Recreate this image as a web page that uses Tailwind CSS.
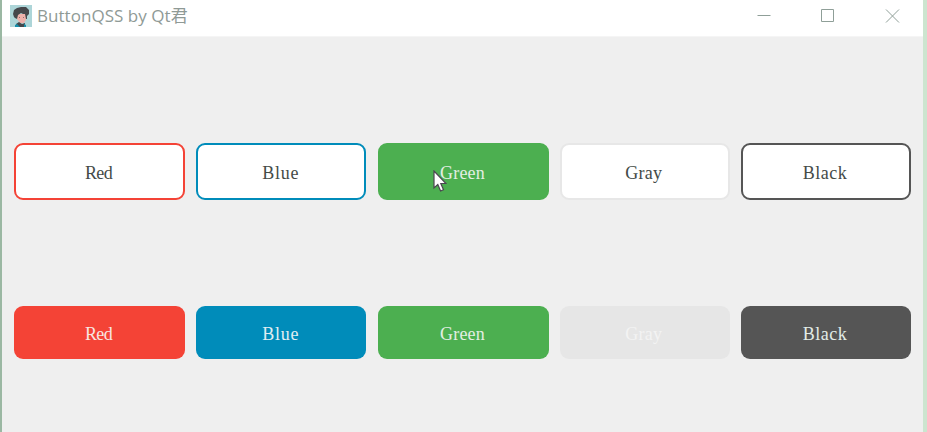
<!DOCTYPE html>
<html lang="en">
<head>
<meta charset="utf-8">
<title>ButtonQSS by Qt君</title>
<script src="https://cdn.jsdelivr.net/npm/@tailwindcss/browser@4"></script>
</head>
<body class="w-[927px] h-[432px] overflow-hidden bg-[#cce5cf] pr-1">
<div class="h-full flex flex-col bg-[#efefef] border-l-2 border-[#9bb8a3]">
  <header class="h-[37px] shrink-0 bg-white border-b border-[#f5f5f5] flex items-start pl-2">
    <svg class="mt-[5px] w-[22px] h-[22px] shrink-0" viewBox="0 0 22 22">
      <path fill="#add5d8" d="M0 0h22v22H0z"/>
      <path fill="#edb0aa" d="M7 9h9v6l-2 3h-4l-3-4z"/>
      <path fill="#45474b" d="M4 12L3 9l1-4 3-2 4-1h5l3 3v4l-2 2v3h-1l-1-5h-2l-2-1-3 2-1 4-2-1z"/>
      <path fill="#45474b" d="M6 22v-3l3-2 3 2 3-1v4z"/>
      <path fill="#168eaa" d="M5 20l2-1 3 3H5zM14 19l2 1v2h-2z"/>
      <path fill="#8d7476" d="M9 12h1v1H9zM13 12h1v1h-1z"/>
    </svg>
    <h1 class="ml-[5px] mt-[4px] text-[17px] leading-6 tracking-[0.04px] text-[#8f9a96] whitespace-nowrap font-['Open_Sans','Noto_Sans_CJK_SC',sans-serif]">ButtonQSS by Qt君</h1>
    <div class="ml-auto mr-[23px] mt-[8px] flex gap-[50px] text-[#8f9f98]">
      <svg class="w-[14px] h-[15px]" viewBox="0 0 14 15" fill="none" stroke="currentColor"><path d="M.5 7.500h13"/></svg>
      <svg class="w-[14px] h-[15px]" viewBox="0 0 14 15" fill="none" stroke="currentColor"><path d="M.5 1.500h12v12H.5z"/></svg>
      <svg class="w-[15px] h-[15px]" viewBox="0 0 15 15" fill="none" stroke="currentColor"><path d="M1 1.500l13 13M14 1.500l-13 13"/></svg>
    </div>
  </header>
  <main class="pt-[106px] pl-3 font-['Liberation_Serif',serif] text-[18px]">
    <div class="grid grid-cols-[171px_170px_171px_170px_170px] gap-x-[11.25px] gap-y-[106px] grid-rows-[57px_53px]">
      <button class="rounded-[9px] border-2 border-[#f44336] bg-white text-[#444b48] pt-1 pr-[2px] tracking-[-0.7px]">Red</button>
      <button class="rounded-[9px] border-2 border-[#008cba] bg-white text-[#444b48] pt-1 pr-[1px] tracking-[0.7px]">Blue</button>
      <button class="relative rounded-[9px] border-2 border-[#4caf50] bg-[#4caf50] text-[#e3eee3] pt-1 pr-[1px] tracking-[0.2px]">Green
        <svg class="absolute left-[53px] top-[25px] w-[14px] h-[23px]" viewBox="0 0 14 23"><path d="M1 1v17l3.800-3.500 2.800 6.500 2.900-1.200-2.700-6.300H13z" fill="#fff" stroke="#4b4650" stroke-width="1.200"/></svg>
      </button>
      <button class="rounded-[9px] border-2 border-[#e7e7e7] bg-white text-[#444b48] pt-1 pr-[2px] tracking-[0.2px]">Gray</button>
      <button class="rounded-[9px] border-2 border-[#555555] bg-white text-[#444b48] pt-1 pr-[2px] tracking-[0.5px]">Black</button>
      <button class="rounded-[9px] bg-[#f44336] text-[#f8e5e1] pt-1 pr-[2px] tracking-[-0.7px]">Red</button>
      <button class="rounded-[9px] bg-[#008cba] text-[#e0eef2] pt-1 pr-[1px] tracking-[0.7px]">Blue</button>
      <button class="rounded-[9px] bg-[#4caf50] text-[#e3eee3] pt-1 pr-[1px] tracking-[0.2px]">Green</button>
      <button class="rounded-[9px] bg-[#e6e6e6] text-[#f3f3f3] pt-1 pr-[2px] tracking-[0.2px]">Gray</button>
      <button class="rounded-[9px] bg-[#555555] text-[#e2ece7] pt-1 pr-[2px] tracking-[0.5px]">Black</button>
    </div>
  </main>
</div>
</body>
</html>
